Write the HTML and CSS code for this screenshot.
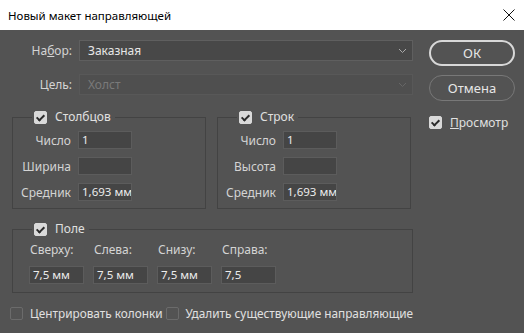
FILE: index.html
```html
<!DOCTYPE html>
<html lang="ru">
<head>
  <meta charset="UTF-8">
  <title>Новый макет направляющей</title>
  <link rel="stylesheet" href="styles.css">
</head>
<body>
  <div class="titlebar">
    <span class="title">Новый макет направляющей</span>
    <svg class="close" width="12" height="12" viewBox="0 0 12 12">
      <path d="M0.5 0.5 L11.5 11.5 M11.5 0.5 L0.5 11.5" stroke="#111" stroke-width="1" fill="none"/>
    </svg>
  </div>

  <div class="dialog">
    <div class="main">
      <div class="form-row">
        <label class="row-label">На<u>б</u>ор:</label>
        <div class="select">
          <span>Заказная</span>
          <svg width="9" height="6" viewBox="0 0 9 6"><path d="M1 1 L4.5 4.5 L8 1" stroke="#aaa" fill="none"/></svg>
        </div>
      </div>
      <div class="form-row second">
        <label class="row-label">Цель:</label>
        <div class="select disabled">
          <span>Холст</span>
          <svg width="9" height="6" viewBox="0 0 9 6"><path d="M1 1 L4.5 4.5 L8 1" stroke="#666" fill="none"/></svg>
        </div>
      </div>

      <div class="groups">
        <fieldset class="group">
          <legend><span class="check on"></span>Столбцов</legend>
          <div class="fields">
            <label>Число</label><div class="input">1</div>
            <label>Ширина</label><div class="input"></div>
            <label>Средник</label><div class="input">1,693 мм</div>
          </div>
        </fieldset>
        <fieldset class="group">
          <legend><span class="check on"></span>Строк</legend>
          <div class="fields">
            <label>Число</label><div class="input">1</div>
            <label>Высота</label><div class="input"></div>
            <label>Средник</label><div class="input">1,693 мм</div>
          </div>
        </fieldset>
      </div>

      <fieldset class="group margins">
        <legend><span class="check on"></span>Поле</legend>
        <div class="margin-grid">
          <label>Сверху:</label>
          <label>Слева:</label>
          <label>Снизу:</label>
          <label>Справа:</label>
          <div class="input">7,5 мм</div>
          <div class="input">7,5 мм</div>
          <div class="input">7,5 мм</div>
          <div class="input">7,5</div>
        </div>
      </fieldset>

      <div class="bottom-row">
        <label class="option"><span class="check"></span>Центрировать колонки</label>
        <label class="option"><span class="check"></span>Удалить существующие направляющие</label>
      </div>
    </div>

    <div class="side">
      <button class="btn primary">ОК</button>
      <button class="btn">Отмена</button>
      <label class="option preview"><span class="check on"></span><span><u>П</u>росмотр</span></label>
    </div>
  </div>
</body>
</html>
```

FILE: styles.css
```css
body {
  margin: 0;
  width: 524px;
  height: 333px;
  overflow: hidden;
  font-family: "Noto Sans", "DejaVu Sans", sans-serif;
  font-size: 12px;
  background: #535353;
}
.titlebar {
  height: 30px;
  background: #fff;
  display: flex;
  align-items: center;
  justify-content: space-between;
  padding: 0 9px 0 8px;
  color: #000;
}
.title {
  font-size: 11.5px;
}
.dialog {
  display: flex;
  gap: 16px;
  padding: 10px 0 0 12px;
  color: #d4d4d4;
}
.main {
  width: 401px;
}
.form-row {
  display: flex;
  align-items: center;
  height: 21px;
}
.form-row.second {
  margin-top: 13px;
}
.row-label {
  width: 60px;
  margin-right: 7px;
  text-align: right;
  font-size: 12px;
}
.select {
  flex: 1;
  height: 19px;
  background: #484848;
  border: 1px solid #5f5f5f;
  display: flex;
  align-items: center;
  justify-content: space-between;
  padding: 0 5px 0 8px;
  font-size: 12px;
  color: #e6e6e6;
}
.select.disabled {
  background: #4f4f4f;
  border-color: #585858;
  color: #7a7a7a;
}
.groups {
  display: flex;
  gap: 11px;
  margin-top: 14px;
}
.group {
  margin: 0;
  padding: 6px 0 7px 0;
  border: 1px solid #434343;
  min-width: 0;
}
.groups .group {
  width: 192px;
}
.group legend {
  display: flex;
  align-items: center;
  gap: 8px;
  margin-left: 19px;
  padding: 0 4px 0 2px;
  font-size: 12px;
  color: #e0e0e0;
  line-height: 16px;
}
.fields {
  display: grid;
  grid-template-columns: 58px 54px;
  column-gap: 7px;
  row-gap: 8px;
  align-items: center;
}
.fields label {
  text-align: right;
  font-size: 12px;
}
.input {
  height: 16px;
  background: #454545;
  border: 1px solid #5c5c5c;
  padding: 0 2px 0 3px;
  font-size: 11.5px;
  line-height: 16px;
  color: #ececec;
  white-space: nowrap;
  overflow: hidden;
}
.margins {
  margin-top: 12px;
  padding: 5px 0 8px 16px;
}
.margins legend {
  margin-left: 3px;
}
.margin-grid {
  display: grid;
  grid-template-columns: repeat(4, 55px);
  column-gap: 9px;
  row-gap: 8px;
}
.margin-grid label {
  padding-left: 1px;
  font-size: 12px;
  line-height: 16px;
}
.check {
  display: inline-block;
  box-sizing: border-box;
  width: 13px;
  height: 13px;
  border: 1px solid #6b6b6b;
  border-radius: 2px;
  flex: none;
  position: relative;
}
.check.on {
  background: #d9d9d9;
  border-color: #d9d9d9;
}
.check.on::after {
  content: "";
  position: absolute;
  left: 3px;
  top: 1px;
  width: 3px;
  height: 6px;
  border: solid #2a2a2a;
  border-width: 0 2px 2px 0;
  transform: rotate(45deg);
}
.bottom-row {
  display: flex;
  gap: 3px;
  margin-top: 12px;
  margin-left: -2px;
  white-space: nowrap;
}
.bottom-row .option {
  font-size: 11.8px;
}
.option {
  display: flex;
  align-items: center;
  gap: 7px;
  font-size: 12px;
  color: #e0e0e0;
  white-space: nowrap;
}
.side {
  width: 86px;
  display: flex;
  flex-direction: column;
}
.btn {
  height: 26px;
  border-radius: 13px;
  background: transparent;
  border: 1px solid #787878;
  color: #e6e6e6;
  font-family: inherit;
  font-size: 13px;
  margin-bottom: 9px;
  padding: 0;
}
.btn.primary {
  border: 2px solid #d8d8d8;
}
.preview {
  margin-top: 4px;
  gap: 8px;
}
```
